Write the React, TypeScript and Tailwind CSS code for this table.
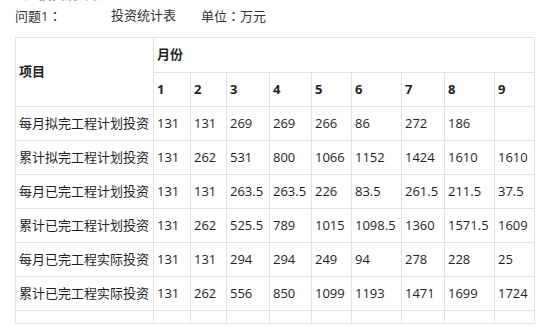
import React from "react";

const widths = [138, 37, 36, 43, 42, 40, 50, 43, 50, 40];
const rows: [string, string[]][] = [
  ["每月拟完工程计划投资", ["131", "131", "269", "269", "266", "86", "272", "186", ""]],
  ["累计拟完工程计划投资", ["131", "262", "531", "800", "1066", "1152", "1424", "1610", "1610"]],
  ["每月已完工程计划投资", ["131", "131", "263.5", "263.5", "226", "83.5", "261.5", "211.5", "37.5"]],
  ["累计已完工程计划投资", ["131", "262", "525.5", "789", "1015", "1098.5", "1360", "1571.5", "1609"]],
  ["每月已完工程实际投资", ["131", "131", "294", "294", "249", "94", "278", "228", "25"]],
  ["累计已完工程实际投资", ["131", "262", "556", "850", "1099", "1193", "1471", "1699", "1724"]],
];

const cell = "border border-[#e3e3e3] pl-[3px] pr-0 align-middle whitespace-nowrap";

function Colon() {
  return <span style={{ fontFamily: '"Noto Sans CJK JP", sans-serif' }}>：</span>;
}

export default function App() {
  return (
    <div
      className="w-[551px] h-[327px] overflow-hidden bg-white text-[13px] text-[#1f1f1f]"
      style={{ fontFamily: '"Open Sans", "Noto Sans CJK SC", sans-serif' }}
    >
      <div className="h-[3px] overflow-hidden pl-[15px] text-[#9a9a9a]">
        <div className="-mt-[15px] leading-[18px]">2、 投资统计表</div>
      </div>
      <div className="flex h-[26px] items-center pl-[15px] text-[#333]">
        <span className="w-[96px]">问题1<Colon /></span>
        <span className="w-[90px]">投资统计表</span>
        <span>单位<Colon />万元</span>
      </div>
      <div className="pl-[15px] pt-[8px]">
        <table className="table-fixed border-collapse" style={{ width: 519 }}>
          <colgroup>
            {widths.map((w, i) => (
              <col key={i} style={{ width: w }} />
            ))}
          </colgroup>
          <thead>
            <tr className="h-[35px]">
              <th rowSpan={2} className={`${cell} text-left font-bold`}>项目</th>
              <th colSpan={9} className={`${cell} text-left font-bold`}>月份</th>
            </tr>
            <tr className="h-[34px]">
              {["1", "2", "3", "4", "5", "6", "7", "8", "9"].map((m) => (
                <th key={m} className={`${cell} text-left font-bold`}>{m}</th>
              ))}
            </tr>
          </thead>
          <tbody>
            {rows.map(([label, vals]) => (
              <tr key={label} className="h-[34px]">
                <td className={cell}>{label}</td>
                {vals.map((v, i) => (
                  <td key={i} className={cell}>{v}</td>
                ))}
              </tr>
            ))}
            <tr className="h-[13px]">
              {widths.map((_, i) => (
                <td key={i} className={cell}></td>
              ))}
            </tr>
          </tbody>
        </table>
      </div>
    </div>
  );
}
